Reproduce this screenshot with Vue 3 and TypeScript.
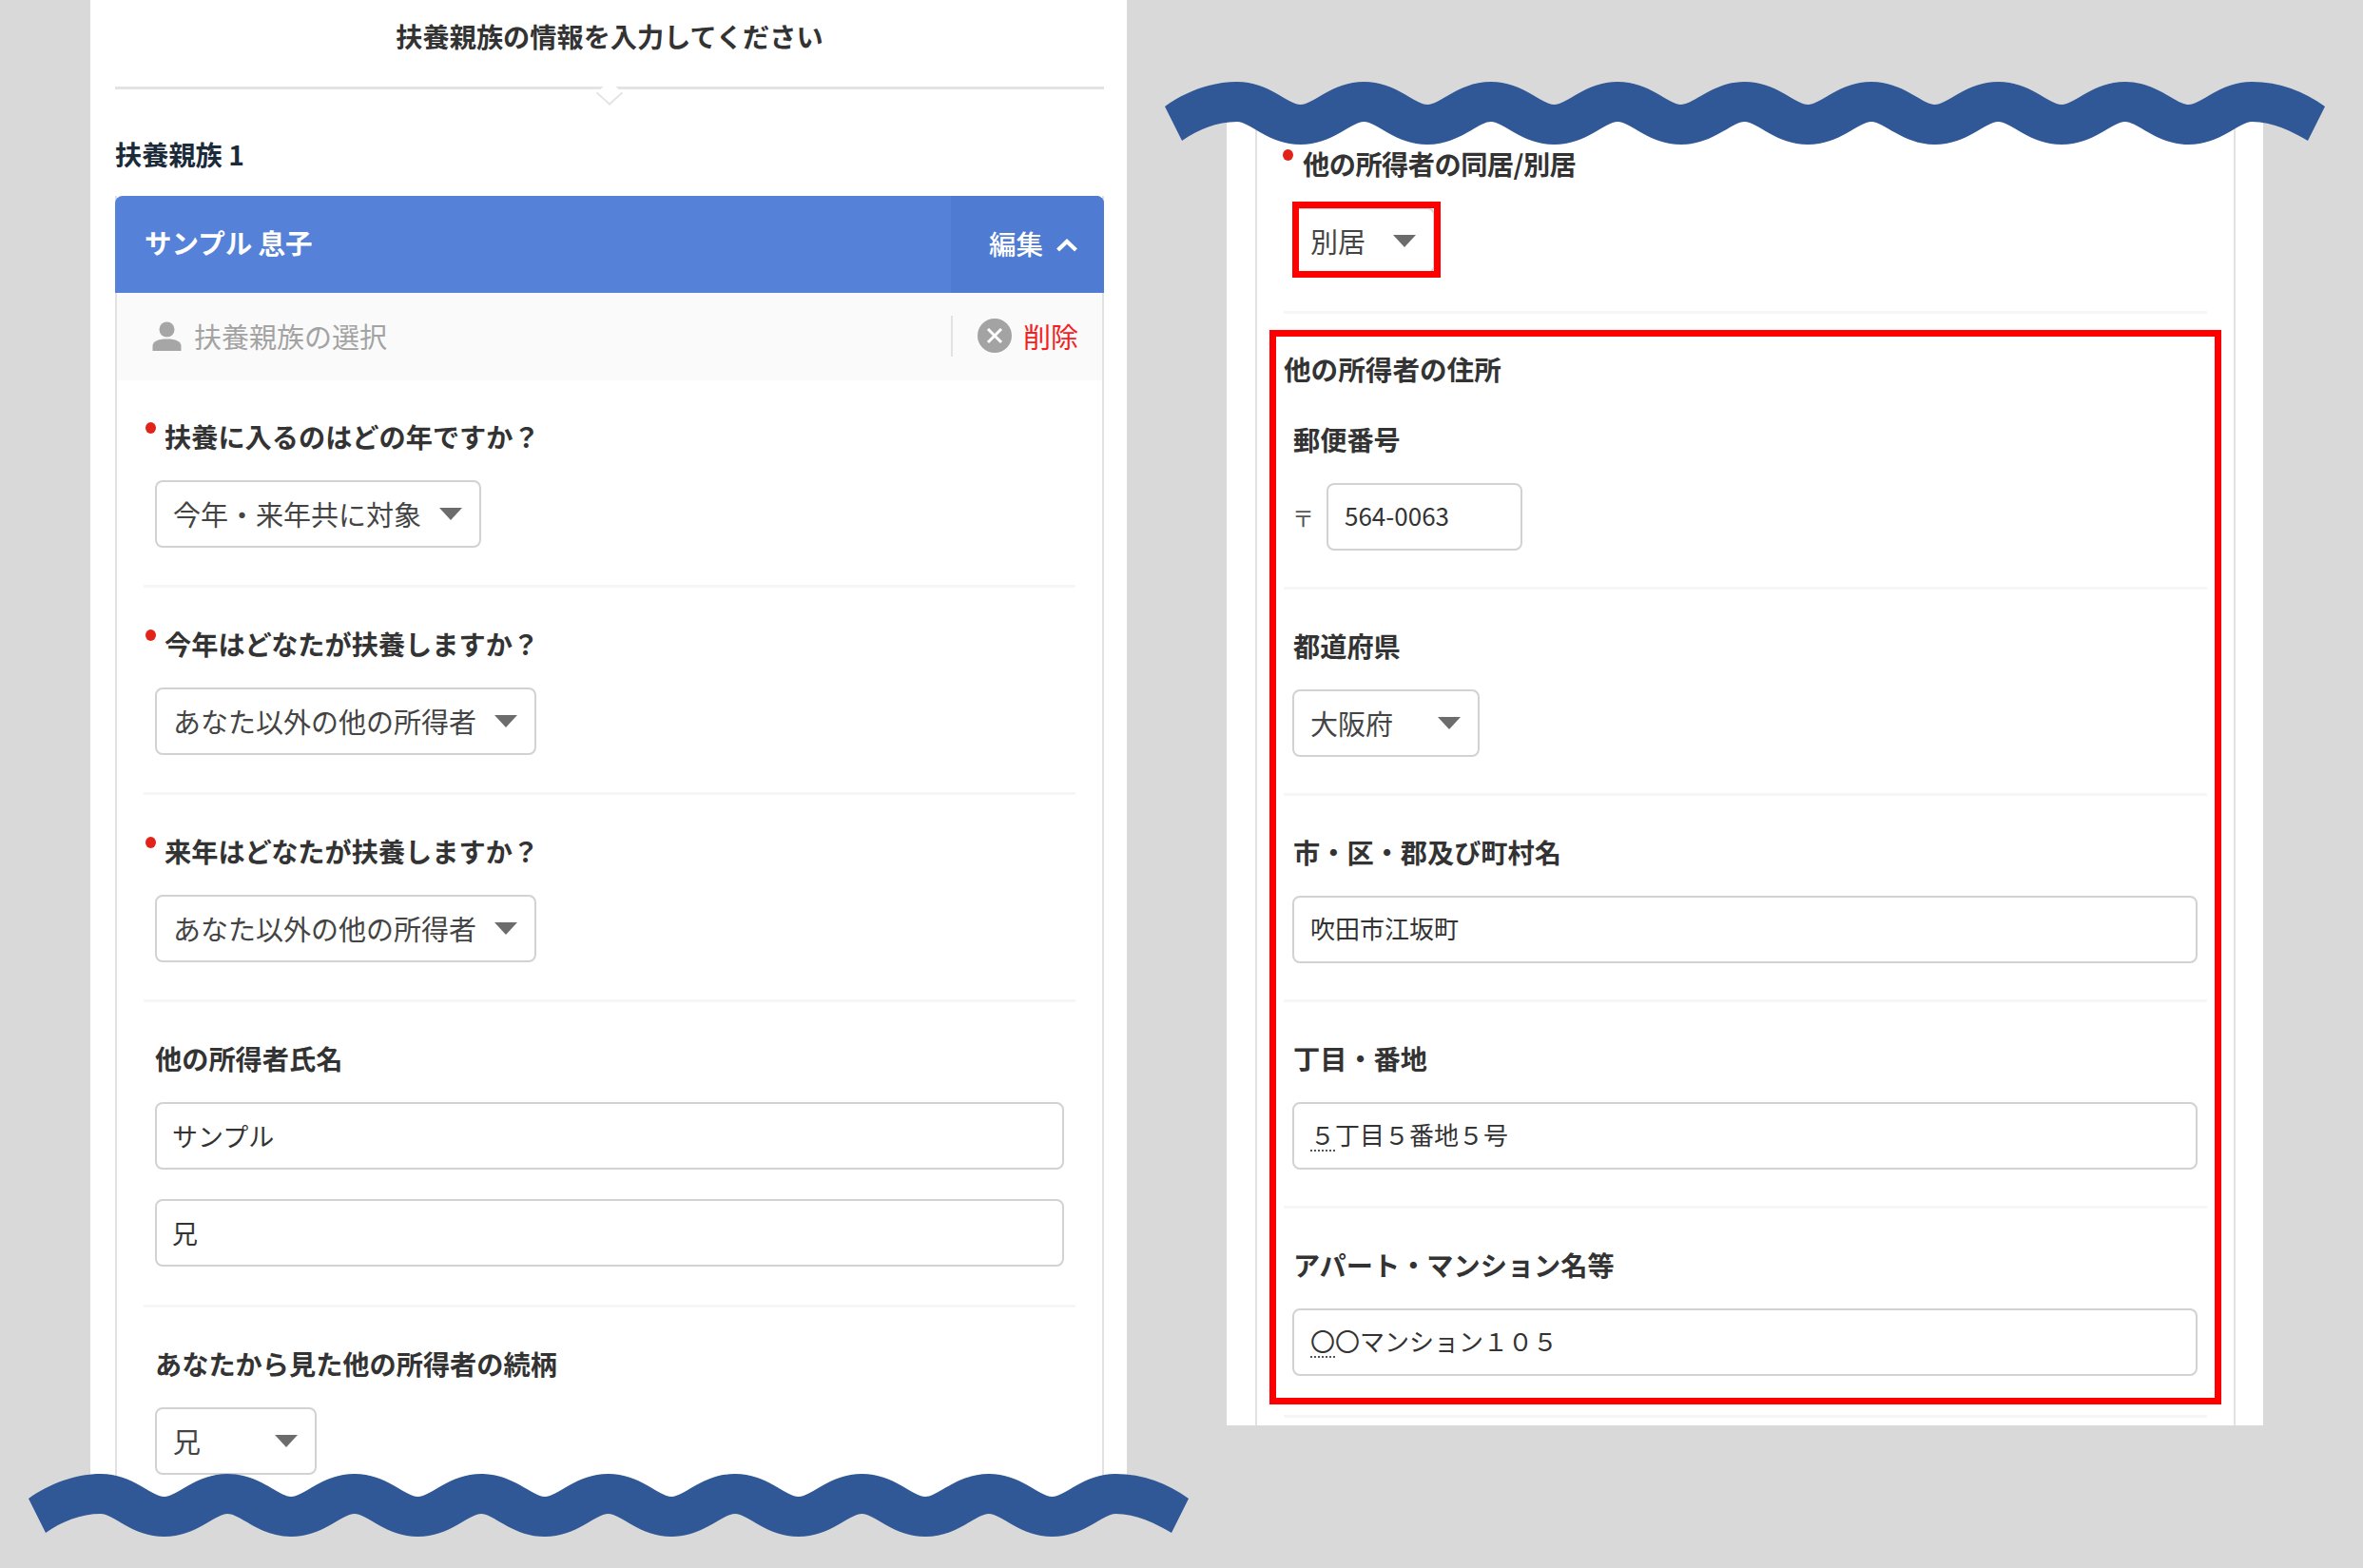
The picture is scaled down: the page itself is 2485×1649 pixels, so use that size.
<script setup lang="ts">
interface Wave { d: string }

const round = 0.5
const sharp = 0.2
const crests: number[] = Array.from({ length: 9 }, (_, i) => 76 + 133.4 * i)
const half = 66.7

function buildWave(): string {
  const f = (n: number) => n.toFixed(1)
  let d = `M0 26 C22 10 50 0 ${f(crests[0])} 0`
  for (let i = 0; i < crests.length - 1; i++) {
    const c = crests[i]
    const t = c + half
    const n = crests[i + 1]
    d += ` C${f(c + round * half)} 0 ${f(t - sharp * half)} 24 ${f(t)} 24`
    d += ` C${f(t + sharp * half)} 24 ${f(n - round * half)} 0 ${f(n)} 0`
  }
  d += ' C1172 0 1198 10 1220 26 L1202 62'
  d += ` C1185 52 1165 42 ${f(crests[8])} 42`
  for (let i = crests.length - 1; i > 0; i--) {
    const c = crests[i]
    const t = c - half
    const p = crests[i - 1]
    d += ` C${f(c - sharp * half)} 42 ${f(t + round * half)} 66 ${f(t)} 66`
    d += ` C${f(t - round * half)} 66 ${f(p + sharp * half)} 42 ${f(p)} 42`
  }
  d += ' C55 42 35 50 18 62 Z'
  return d
}

const wave: Wave = { d: buildWave() }

const yearRows = [
  { label: '扶養に入るのはどの年ですか？', value: '今年・来年共に対象', width: 343 },
  { label: '今年はどなたが扶養しますか？', value: 'あなた以外の他の所得者', width: 401 },
  { label: '来年はどなたが扶養しますか？', value: 'あなた以外の他の所得者', width: 401 }
]
</script>

<template>
  <div class="canvas">
    <section class="panel panel-left">
      <h1 class="title">扶養親族の情報を入力してください<span class="notch"></span></h1>
      <h2 class="section-name">扶養親族 1</h2>
      <div class="card card-left">
        <div class="card-head">
          <span class="head-name">サンプル 息子</span>
          <span class="head-edit">
            編集
            <svg class="chevron" width="24" height="16" viewBox="0 0 24 16">
              <path d="M2.5 13 L12 4 L21.5 13" fill="none" stroke="#fff" stroke-width="4.2" />
            </svg>
          </span>
        </div>
        <div class="card-sub">
          <span class="sub-pick">
            <svg width="31" height="31" viewBox="0 0 31 31">
              <circle cx="15.5" cy="8.5" r="8" fill="#a6a6a6" />
              <path d="M0.5 31 V26 C0.5 21 6 18.5 15.5 18.5 C25 18.5 30.5 21 30.5 26 V31 Z" fill="#a6a6a6" />
            </svg>
            扶養親族の選択
          </span>
          <span class="sub-delete">
            <svg width="36" height="36" viewBox="0 0 36 36">
              <circle cx="18" cy="18" r="18" fill="#a3a3a3" />
              <path d="M11 11 L25 25 M25 11 L11 25" stroke="#fff" stroke-width="3" />
            </svg>
            削除
          </span>
        </div>

        <div v-for="row in yearRows" :key="row.label" class="row">
          <div class="label required">{{ row.label }}</div>
          <div class="select" :style="{ width: row.width + 'px' }">{{ row.value }}<i class="arrow"></i></div>
        </div>

        <div class="row row-names">
          <div class="label">他の所得者氏名</div>
          <div class="input">サンプル</div>
          <div class="input second">兄</div>
        </div>

        <div class="row">
          <div class="label">あなたから見た他の所得者の続柄</div>
          <div class="select" style="width: 170px">兄<i class="arrow"></i></div>
        </div>
      </div>
    </section>

    <section class="panel panel-right">
      <div class="card card-right">
        <div class="row row-top">
          <div class="label required">他の所得者の同居/別居</div>
          <div class="select select-marked" style="width: 150px">別居<i class="arrow"></i><span class="mark mark-small"></span></div>
        </div>

        <div class="address">
          <span class="mark mark-big"></span>
          <h3 class="address-title">他の所得者の住所</h3>
          <div class="row row-postal">
            <div class="label">郵便番号</div>
            <div class="postal">
              <span class="postal-sign">〒</span>
              <div class="input input-postal">564-0063</div>
            </div>
          </div>
          <div class="row">
            <div class="label">都道府県</div>
            <div class="select" style="width: 197px">大阪府<i class="arrow"></i></div>
          </div>
          <div class="row">
            <div class="label">市・区・郡及び町村名</div>
            <div class="input">吹田市江坂町</div>
          </div>
          <div class="row">
            <div class="label">丁目・番地</div>
            <div class="input"><span class="ime">５</span>丁目５番地５号</div>
          </div>
          <div class="row">
            <div class="label">アパート・マンション名等</div>
            <div class="input"><span class="ime">〇</span>〇マンション１０５</div>
          </div>
        </div>
      </div>
    </section>

    <svg class="wave wave-left" width="1220" height="68" viewBox="0 0 1220 68"><path :d="wave.d" fill="#305796" /></svg>
    <svg class="wave wave-right" width="1220" height="68" viewBox="0 0 1220 68"><path :d="wave.d" fill="#305796" /></svg>
  </div>
</template>

<style>
html, body { margin: 0; background: #d9d9d9; }
</style>

<style scoped>
.canvas {
  position: relative;
  width: 2485px;
  height: 1649px;
  overflow: hidden;
  display: flex;
  align-items: flex-start;
  background: #d9d9d9;
  font-family: "Noto Sans CJK JP", "Noto Sans", sans-serif;
  color: #333;
  font-size: 28px;
}
.panel {
  width: 1090px;
  background: #fff;
  box-sizing: border-box;
  overflow: hidden;
}
.panel-left {
  margin-left: 95px;
  height: 1575px;
  padding: 0 24px 0 26px;
}
.panel-right {
  margin-left: 105px;
  margin-top: 120px;
  height: 1379px;
  padding: 0 29px 0 30px;
}
.title {
  position: relative;
  margin: 0;
  height: 91px;
  line-height: 76px;
  border-bottom: 3px solid #e3e3e3;
  text-align: center;
  font-size: 28.2px;
  font-weight: 700;
  color: #333;
}
.notch {
  position: absolute;
  left: 50%;
  bottom: -17px;
  width: 18px;
  height: 18px;
  margin-left: -10px;
  background: #fff;
  border-right: 2px solid #e3e3e3;
  border-bottom: 2px solid #e3e3e3;
  transform: scaleY(0.9) rotate(45deg);
  transform-origin: center;
}
.section-name {
  margin: 51px 0 27px;
  line-height: 34px;
  font-size: 28.2px;
  font-weight: 700;
  color: #1c2b3a;
}
.card {
  border-left: 2px solid #e2e2e2;
  border-right: 2px solid #e2e2e2;
}
.card-head {
  display: flex;
  justify-content: space-between;
  height: 102px;
  margin: 0 -2px;
  background: #5581d8;
  border-radius: 8px 8px 0 0;
  color: #fff;
  overflow: hidden;
  line-height: 98px;
  font-size: 28.5px;
  font-weight: 700;
}
.head-name { padding-left: 31px; }
.head-edit {
  display: flex;
  align-items: center;
  justify-content: flex-end;
  gap: 13px;
  width: 161px;
  box-sizing: border-box;
  padding: 0 27px 2px 0;
  background: #4f7bd2;
  font-weight: 500;
}
.chevron { margin-top: 3px; }
.card-sub {
  display: flex;
  align-items: center;
  justify-content: space-between;
  height: 92px;
  box-sizing: border-box;
  padding-bottom: 2px;
  background: #fafafa;
  color: #a3a3a3;
  font-size: 29px;
}
.sub-pick {
  display: flex;
  align-items: center;
  gap: 13px;
  padding-left: 37px;
}
.sub-delete {
  display: flex;
  align-items: center;
  gap: 12px;
  width: 159px;
  height: 43px;
  box-sizing: border-box;
  padding-left: 26px;
  border-left: 2px solid #e2e2e2;
  color: #f5201e;
}
.row {
  margin: 0 28px;
  padding: 42px 11px 39px;
  border-bottom: 3px solid #f6f6f6;
}
.card-left .row { padding-left: 12px; padding-right: 12px; }
.card-left .required { padding-left: 10px; }
.card-right .row { padding-left: 9px; padding-right: 10px; padding-bottom: 38px; }
.label {
  position: relative;
  height: 34px;
  line-height: 34px;
  margin-bottom: 29px;
  font-size: 28.2px;
  font-weight: 700;
  white-space: nowrap;
}
.address .label { padding-left: 1px; }
.required { padding-left: 11px; }
.required::before {
  content: "";
  position: absolute;
  left: -10px;
  top: 2px;
  width: 11px;
  height: 12px;
  border-radius: 50%;
  background: #e2231a;
}
.select {
  position: relative;
  height: 71px;
  box-sizing: border-box;
  padding-left: 17px;
  line-height: 67px;
  border: 2px solid #d2d2d2;
  border-radius: 8px;
  color: #444;
  background: #fff;
  font-size: 29px;
  white-space: nowrap;
}
.arrow {
  position: absolute;
  right: 18px;
  top: 27px;
  border-left: 12px solid transparent;
  border-right: 12px solid transparent;
  border-top: 13px solid #6c6c6c;
}
.input {
  height: 71px;
  box-sizing: border-box;
  padding-left: 16px;
  line-height: 67px;
  border: 2px solid #d2d2d2;
  border-radius: 8px;
  font-size: 27px;
  color: #333;
  white-space: nowrap;
}
.card-right .input { font-size: 26px; line-height: 64px; padding-left: 17px; }
.second { margin-top: 31px; }
.row-names { padding-bottom: 40px; }
.card-right { height: 100%; }
.card-right .row-top { padding-top: 35px; padding-bottom: 39px; }
.row-top .label { margin-bottom: 29px; letter-spacing: -0.5px; }
.select-marked { height: 70px; }
.mark {
  position: absolute;
  box-sizing: border-box;
  border: 7px solid #ff0000;
  pointer-events: none;
}
.mark-small { left: -2px; right: -8px; top: -8px; bottom: -6px; }
.address { position: relative; }
.mark-big { left: 13px; right: 13px; top: 17px; bottom: 14px; }
.address-title {
  margin: 0 28px 40px;
  padding-top: 41px;
  line-height: 34px;
  font-size: 28.6px;
  font-weight: 700;
  color: #333;
}
.card-right .row-postal { padding-top: 0; }
.postal {
  display: flex;
  align-items: center;
  gap: 13px;
}
.postal-sign { font-size: 23px; width: 23px; color: #555; }
.input-postal { width: 206px; }
.card-right .address .row:last-child { padding-bottom: 41px; }
.ime {
  text-decoration: underline dotted #555 2px;
  text-underline-offset: 5px;
}
.wave { position: absolute; }
.wave-left { left: 30px; top: 1550px; }
.wave-right { left: 1225px; top: 86px; }
</style>
